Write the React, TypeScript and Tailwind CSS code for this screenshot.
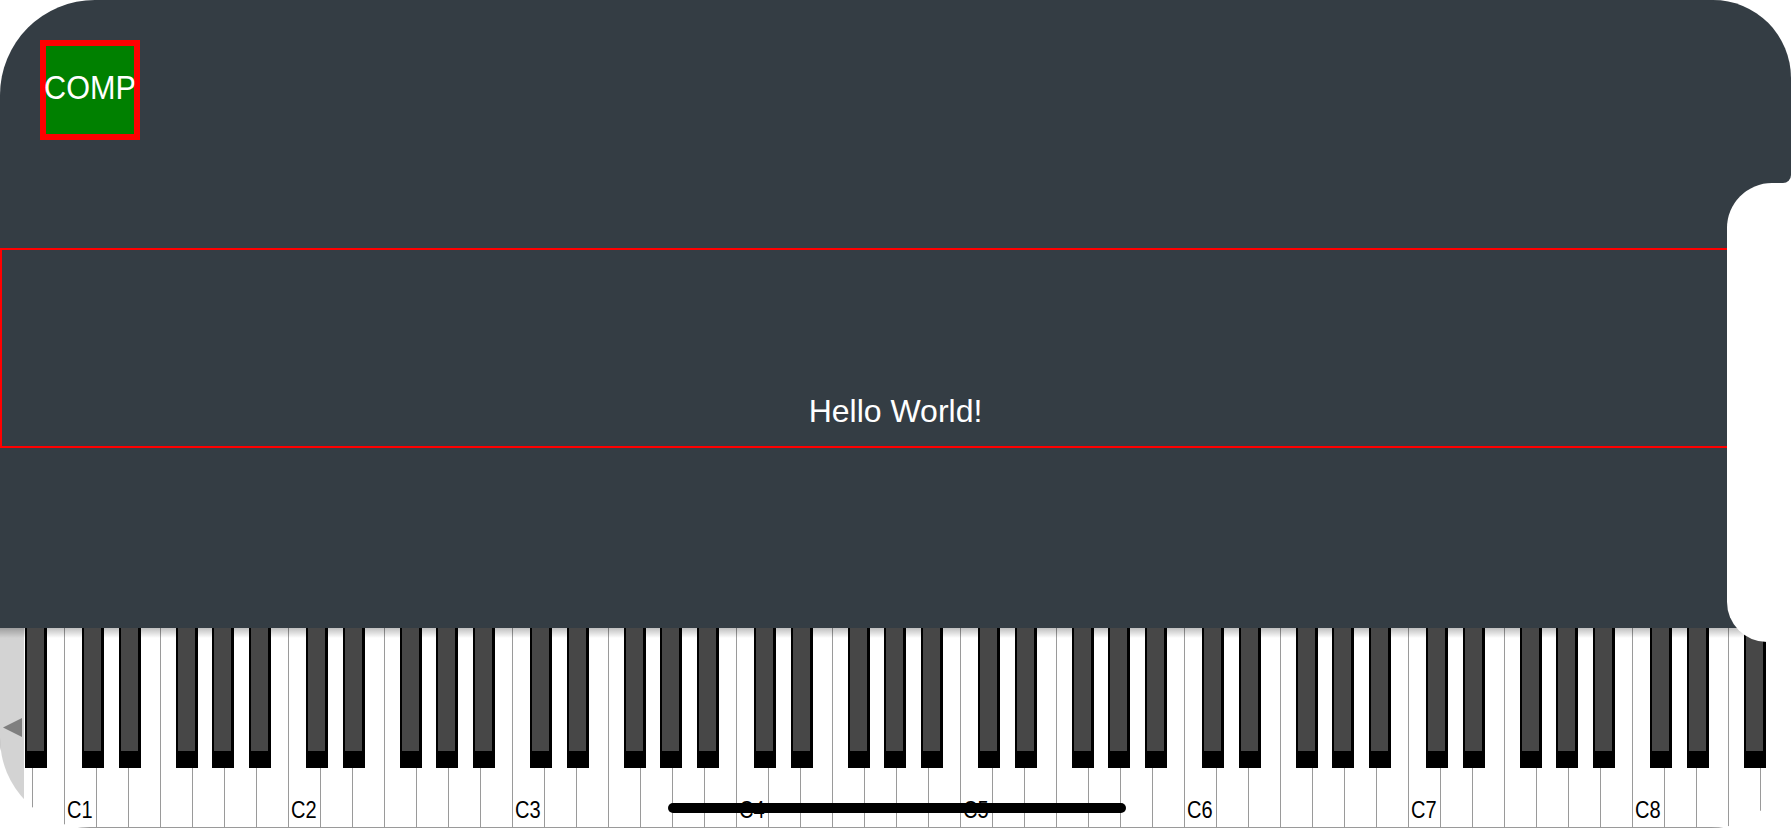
import React from "react";

const WHITE_W = 32;
const NAMES = ["A", "B", "C", "D", "E", "F", "G"];
// where each black key sits, measured from the left edge of its octave's C
const SHARP_OFFSET: Record<string, number> = {
  C: 18.2,
  D: 54.8,
  F: 112.2,
  G: 148.2,
  A: 184.8,
};

type WhiteKey = { name: string; octave: number; label?: string };

const whiteKeys: WhiteKey[] = Array.from({ length: 56 }, (_, i) => {
  const name = NAMES[i % 7];
  const octave = Math.floor((i + 5) / 7);
  return { name, octave, label: name === "C" ? `C${octave}` : undefined };
});

const blackKeys = whiteKeys
  .filter((k) => SHARP_OFFSET[k.name] !== undefined)
  .map((k) => 64 + (k.octave - 1) * 7 * WHITE_W + SHARP_OFFSET[k.name])
  .filter((x) => x < 1770);

function CompBox() {
  return (
    <div className="w-[100px] h-[100px] border-[6px] border-[#ff0000] bg-[#008000] flex items-center justify-center pb-[7px]">
      <span className="text-white text-[34px] leading-none whitespace-nowrap scale-x-[0.9]">
        COMP
      </span>
    </div>
  );
}

function Keyboard() {
  return (
    <div className="relative h-[200px] flex-none bg-white overflow-hidden">
      {/* white keys */}
      <div className="flex h-full">
        {whiteKeys.map((k, i) => (
          <div
            key={i}
            className="w-[32px] h-full flex-none border-l border-b border-[#9a9a9a] bg-white flex items-end pb-[5px] pl-[2px]"
          >
            {k.label && (
              <span className="text-[23px] leading-none text-black origin-left scale-x-[0.87] whitespace-nowrap">
                {k.label}
              </span>
            )}
          </div>
        ))}
      </div>

      {/* scroll left button */}
      <div className="absolute left-0 top-0 bottom-0 w-[24px] bg-[#d3d3d3]">
        <svg className="absolute left-[3px] top-[90px]" width="19" height="19" viewBox="0 0 19 19">
          <polygon points="0,9.5 19,0 19,19" fill="#7f7f7f" />
        </svg>
      </div>

      {/* shade under the top panel */}
      <div className="absolute top-0 inset-x-0 h-[10px] bg-linear-to-b from-black/25 to-transparent" />

      {/* black keys */}
      {blackKeys.map((x, i) => (
        <div
          key={i}
          className="absolute top-0 w-[22px] h-[140px] bg-[#474747] border-l-2 border-r-[3px] border-b-[17px] border-black"
          style={{ left: x }}
        />
      ))}
    </div>
  );
}

export default function App() {
  return (
    <div className="w-[1792px] h-[828px] bg-white overflow-hidden font-['Liberation_Sans',Arial,sans-serif]">
      <div className="relative w-[1791px] h-[828px] flex flex-col overflow-hidden rounded-tl-[95px] rounded-bl-[90px] rounded-tr-[78px] rounded-br-[80px]">
        {/* app area */}
        <div className="h-[628px] flex-none bg-[#343d44] flex flex-col">
          <div className="pt-[40px] pl-[40px]">
            <CompBox />
          </div>
          <div className="mt-[108px] h-[200px] border-2 border-[#ff0000] flex items-end justify-center pb-[19px]">
            <span className="text-white text-[32px] leading-[32px]">Hello World!</span>
          </div>
        </div>

        <Keyboard />

        {/* sensor housing */}
        <div className="absolute right-0 top-[175px] w-[10px] h-[8px] bg-white">
          <div className="w-full h-full bg-[#343d44] rounded-br-[8px]" />
        </div>
        <div className="absolute right-0 top-[183px] w-[64px] h-[459px] bg-white rounded-tl-[45px] rounded-bl-[40px]" />

        {/* home indicator */}
        <div className="absolute left-[668px] bottom-[15px] w-[458px] h-[10px] rounded-full bg-black" />
      </div>
    </div>
  );
}
